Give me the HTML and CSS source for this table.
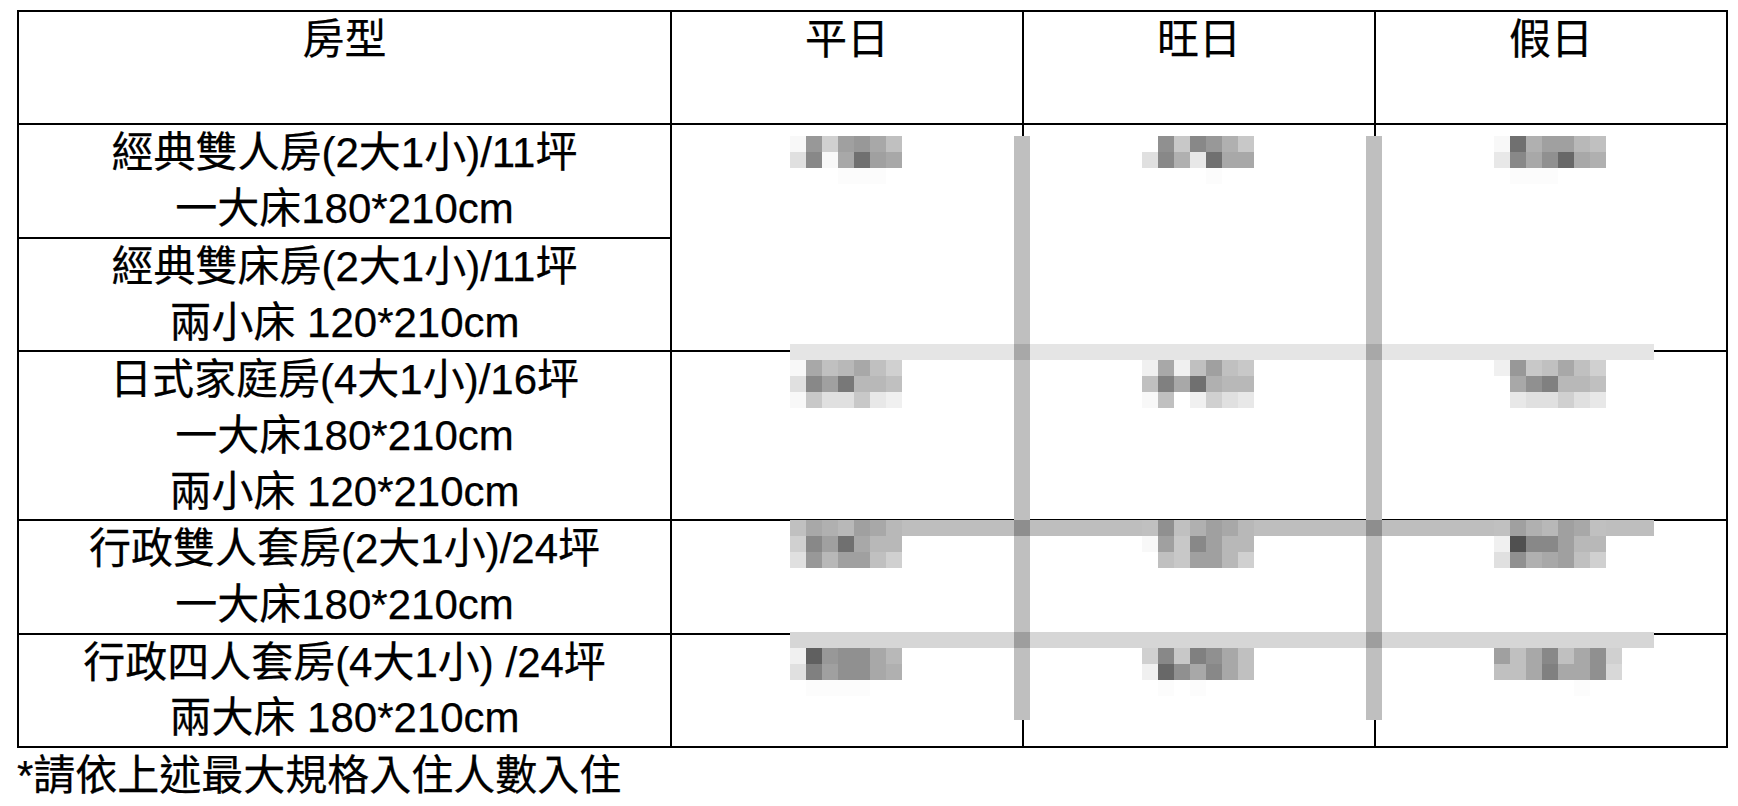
FILE: index.html
```html
<!DOCTYPE html>
<html lang="zh-Hant">
<head>
<meta charset="utf-8">
<title>房型價格表</title>
<link rel="stylesheet" href="styles.css">
</head>
<body>
<div class="sheet">
  <table class="rates">
    <colgroup>
      <col class="c-type">
      <col class="c-price">
      <col class="c-price">
      <col class="c-price">
    </colgroup>
    <thead>
      <tr class="head">
        <th>房型</th>
        <th>平日</th>
        <th>旺日</th>
        <th>假日</th>
      </tr>
    </thead>
    <tbody>
      <tr>
        <td class="type">經典雙人房(2大1小)/11坪<br>一大床180*210cm</td>
        <td class="price pr1" rowspan="2">
          <div class="mosaic">
            <i class="gf8"></i><i class="g98"></i><i class="gd0"></i><i class="ga0"></i><i class="g98"></i><i class="ga8"></i><i class="gc0"></i>
            <i class="ge0"></i><i class="g88"></i><i class="gf8"></i><i class="ga8"></i><i class="g70"></i><i class="ga0"></i><i class="ga8"></i>
            <i class="g0"></i><i class="g0"></i><i class="g0"></i><i class="gfc"></i><i class="gfc"></i><i class="gfc"></i><i class="g0"></i>
          </div>
        </td>
        <td class="price pr1" rowspan="2">
          <div class="mosaic">
            <i class="g0"></i><i class="g90"></i><i class="gc8"></i><i class="g88"></i><i class="g98"></i><i class="gb0"></i><i class="gc8"></i>
            <i class="ge0"></i><i class="g88"></i><i class="gb0"></i><i class="ge8"></i><i class="g70"></i><i class="ga8"></i><i class="ga8"></i>
            <i class="g0"></i><i class="g0"></i><i class="g0"></i><i class="g0"></i><i class="gfc"></i><i class="g0"></i><i class="g0"></i>
          </div>
        </td>
        <td class="price pr1" rowspan="2">
          <div class="mosaic">
            <i class="gf8"></i><i class="g70"></i><i class="gb0"></i><i class="ga0"></i><i class="ga0"></i><i class="gb8"></i><i class="gc0"></i>
            <i class="ge8"></i><i class="g88"></i><i class="ga8"></i><i class="g90"></i><i class="g68"></i><i class="ga8"></i><i class="gb0"></i>
            <i class="g0"></i><i class="gfc"></i><i class="gfc"></i><i class="gfc"></i><i class="g0"></i><i class="g0"></i><i class="g0"></i>
          </div>
        </td>
      </tr>
      <tr>
        <td class="type">經典雙床房(2大1小)/11坪<br>兩小床 120*210cm</td>
      </tr>
      <tr>
        <td class="type">日式家庭房(4大1小)/16坪<br>一大床180*210cm<br>兩小床 120*210cm</td>
        <td class="price pr3">
          <div class="mosaic">
            <i class="gf8"></i><i class="ga8"></i><i class="gc0"></i><i class="gb8"></i><i class="ga8"></i><i class="gc0"></i><i class="gd0"></i>
            <i class="ge0"></i><i class="g88"></i><i class="ga0"></i><i class="g78"></i><i class="gb8"></i><i class="gb8"></i><i class="gc0"></i>
            <i class="gf8"></i><i class="gc8"></i><i class="ge0"></i><i class="ge0"></i><i class="gc8"></i><i class="ge8"></i><i class="gf0"></i>
          </div>
        </td>
        <td class="price pr3">
          <div class="mosaic">
            <i class="gf0"></i><i class="ga8"></i><i class="gf0"></i><i class="gc0"></i><i class="ga0"></i><i class="gc0"></i><i class="gc8"></i>
            <i class="gc0"></i><i class="g80"></i><i class="ga8"></i><i class="g70"></i><i class="gb0"></i><i class="gb8"></i><i class="gb8"></i>
            <i class="gf8"></i><i class="gc0"></i><i class="g0"></i><i class="gf0"></i><i class="gd0"></i><i class="ge0"></i><i class="ge8"></i>
          </div>
        </td>
        <td class="price pr3">
          <div class="mosaic">
            <i class="gf0"></i><i class="g98"></i><i class="gc8"></i><i class="gc0"></i><i class="ga8"></i><i class="gc0"></i><i class="gd0"></i>
            <i class="g0"></i><i class="ga8"></i><i class="g90"></i><i class="g80"></i><i class="gb8"></i><i class="gb8"></i><i class="gc0"></i>
            <i class="g0"></i><i class="ge8"></i><i class="ge0"></i><i class="ge0"></i><i class="gd0"></i><i class="ge0"></i><i class="ge8"></i>
          </div>
        </td>
      </tr>
      <tr>
        <td class="type">行政雙人套房(2大1小)/24坪<br>一大床180*210cm</td>
        <td class="price pr4">
          <div class="mosaic">
            <i class="gc0"></i><i class="ga8"></i><i class="gb0"></i><i class="gb8"></i><i class="ga0"></i><i class="ga8"></i><i class="gb8"></i>
            <i class="gd0"></i><i class="g88"></i><i class="ga0"></i><i class="g70"></i><i class="ga8"></i><i class="gb8"></i><i class="gb8"></i>
            <i class="ge0"></i><i class="g98"></i><i class="gb8"></i><i class="ga0"></i><i class="ga0"></i><i class="gc0"></i><i class="gd0"></i>
          </div>
        </td>
        <td class="price pr4">
          <div class="mosaic">
            <i class="gc0"></i><i class="g90"></i><i class="gc0"></i><i class="gb0"></i><i class="ga0"></i><i class="ga8"></i><i class="gb8"></i>
            <i class="gf8"></i><i class="ga0"></i><i class="gc8"></i><i class="g88"></i><i class="ga0"></i><i class="gb8"></i><i class="gb8"></i>
            <i class="g0"></i><i class="gc0"></i><i class="gc8"></i><i class="ga0"></i><i class="ga0"></i><i class="gb8"></i><i class="gd0"></i>
          </div>
        </td>
        <td class="price pr4">
          <div class="mosaic">
            <i class="gc0"></i><i class="ga0"></i><i class="gb0"></i><i class="gb8"></i><i class="ga0"></i><i class="ga8"></i><i class="gc0"></i>
            <i class="gf0"></i><i class="g50"></i><i class="g88"></i><i class="g88"></i><i class="ga0"></i><i class="gb8"></i><i class="gb8"></i>
            <i class="ge0"></i><i class="g90"></i><i class="gb0"></i><i class="ga8"></i><i class="ga0"></i><i class="gc0"></i><i class="gd0"></i>
          </div>
        </td>
      </tr>
      <tr>
        <td class="type">行政四人套房(4大1小) /24坪<br>兩大床 180*210cm</td>
        <td class="price pr5">
          <div class="mosaic">
            <i class="gf0"></i><i class="g60"></i><i class="g98"></i><i class="g90"></i><i class="g90"></i><i class="ga8"></i><i class="gb8"></i>
            <i class="ge0"></i><i class="g80"></i><i class="ga0"></i><i class="g90"></i><i class="g90"></i><i class="ga8"></i><i class="gb0"></i>
            <i class="g0"></i><i class="gfc"></i><i class="gfc"></i><i class="gfc"></i><i class="gfc"></i><i class="g0"></i><i class="g0"></i>
          </div>
        </td>
        <td class="price pr5">
          <div class="mosaic">
            <i class="gd0"></i><i class="g88"></i><i class="gc8"></i><i class="g80"></i><i class="g90"></i><i class="ga8"></i><i class="gc0"></i>
            <i class="gf0"></i><i class="g68"></i><i class="g90"></i><i class="ga8"></i><i class="g88"></i><i class="ga8"></i><i class="gc0"></i>
            <i class="g0"></i><i class="gfc"></i><i class="g0"></i><i class="gfc"></i><i class="g0"></i><i class="g0"></i><i class="g0"></i>
          </div>
        </td>
        <td class="price pr5">
          <div class="mosaic wide">
            <i class="ga0"></i><i class="gc0"></i><i class="ga8"></i><i class="g88"></i><i class="gc0"></i><i class="ga8"></i><i class="g90"></i><i class="gd0"></i>
            <i class="gc0"></i><i class="gc0"></i><i class="ga8"></i><i class="g80"></i><i class="ga8"></i><i class="ga8"></i><i class="g90"></i><i class="gd8"></i>
            <i class="g0"></i><i class="g0"></i><i class="g0"></i><i class="g0"></i><i class="g0"></i><i class="gfc"></i><i class="g0"></i><i class="g0"></i>
          </div>
        </td>
      </tr>
    </tbody>
  </table>
  <p class="note">*請依上述最大規格入住人數入住</p>

  <span class="bar bar-v v1"></span>
  <span class="bar bar-v v2"></span>
  <span class="bar bar-h h1"></span>
  <span class="bar bar-h h2"></span>
  <span class="bar bar-h h3"></span>
  <span class="cross c11"></span>
  <span class="cross c12"></span>
  <span class="cross c21"></span>
  <span class="cross c22"></span>
  <span class="cross c31"></span>
  <span class="cross c32"></span>
</div>
</body>
</html>
```

FILE: styles.css
```css
html, body {
  margin: 0;
  padding: 0;
  background: #ffffff;
}

body {
  color: #000000;
  font-family: "Liberation Sans", "Noto Sans CJK TC", sans-serif;
}

.sheet {
  position: relative;
  padding: 10px 0 0 17px;
  width: 1711px;
}

.rates {
  border-collapse: collapse;
  table-layout: fixed;
  width: 1711px;
  font-size: 42px;
  line-height: 55.7px;
  -webkit-text-stroke: 0.25px #000000;
}

.c-type {
  width: 653px;
}

.rates th,
.rates td {
  border: 2px solid #000000;
  padding: 0;
  text-align: center;
  vertical-align: top;
  font-weight: normal;
}

.head th {
  height: 111.4px;
}

.rates td.price {
  text-align: left;
  padding-left: 118px;
}

.rates td.pr1 { padding-top: 11px; }
.rates td.pr3 { padding-top: 8px; }
.rates td.pr4 { padding-top: 0; }
.rates td.pr5 { padding-top: 13px; }

.pr4 .mosaic {
  margin-top: -1px;
}

.mosaic {
  position: relative;
  z-index: 3;
  display: grid;
  grid-template-columns: repeat(7, 16px);
  grid-auto-rows: 16px;
  width: max-content;
}

.mosaic.wide {
  grid-template-columns: repeat(8, 16px);
}

.mosaic i {
  display: block;
}

.g0 { background: transparent; }
.g50 { background: #505050; }
.g60 { background: #606060; }
.g68 { background: #686868; }
.g70 { background: #707070; }
.g78 { background: #787878; }
.g80 { background: #808080; }
.g88 { background: #888888; }
.g90 { background: #909090; }
.g98 { background: #989898; }
.ga0 { background: #a0a0a0; }
.ga8 { background: #a8a8a8; }
.gb0 { background: #b0b0b0; }
.gb8 { background: #b8b8b8; }
.gc0 { background: #c0c0c0; }
.gc8 { background: #c8c8c8; }
.gd0 { background: #d0d0d0; }
.gd8 { background: #d8d8d8; }
.ge0 { background: #e0e0e0; }
.ge8 { background: #e8e8e8; }
.gf0 { background: #f0f0f0; }
.gf8 { background: #f8f8f8; }
.gfc { background: #fcfcfc; }

.note {
  margin: 0;
  font-size: 42px;
  line-height: 55.7px;
  -webkit-text-stroke: 0.25px #000000;
}

/* pixelation artifacts laid over the price columns */
.bar {
  position: absolute;
  z-index: 1;
}

.bar-v {
  top: 136px;
  height: 584px;
  width: 16px;
  background: #bfbfbf;
}

.v1 { left: 1014px; }
.v2 { left: 1366px; }

.bar-h {
  left: 790px;
  width: 864px;
  height: 16px;
}

.h1 { top: 344px; background: #e5e5e5; }
.h2 { top: 520px; background: #bebebe; }
.h3 { top: 632px; background: #d6d6d6; }

.cross {
  position: absolute;
  z-index: 2;
  width: 16px;
  height: 16px;
}

.c11 { left: 1014px; top: 344px; background: #a8a8a8; }
.c12 { left: 1366px; top: 344px; background: #a8a8a8; }
.c21 { left: 1014px; top: 520px; background: #8e8e8e; }
.c22 { left: 1366px; top: 520px; background: #8e8e8e; }
.c31 { left: 1014px; top: 632px; background: #9e9e9e; }
.c32 { left: 1366px; top: 632px; background: #9e9e9e; }
```
